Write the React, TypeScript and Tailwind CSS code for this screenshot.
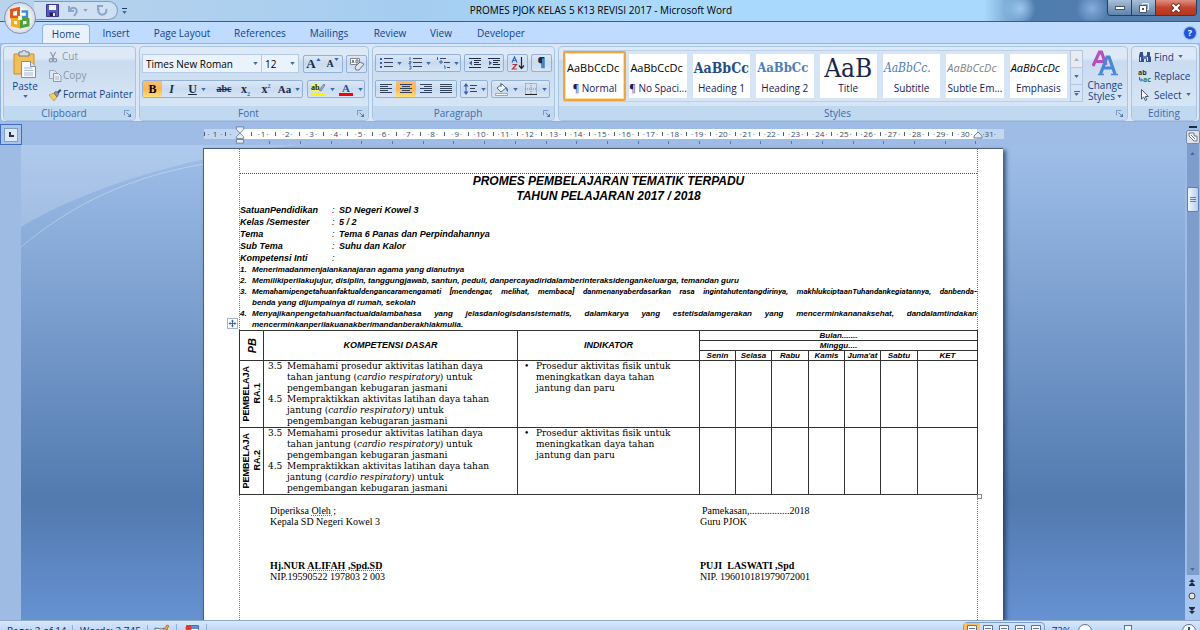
import type { ReactNode } from 'react';
import clsx from 'clsx';

const TABS = [
  { name: 'Insert', width: 'w-[52px]' },
  { name: 'Page Layout', width: 'w-20' },
  { name: 'References', width: 'w-[76px]' },
  { name: 'Mailings', width: 'w-[62px]' },
  { name: 'Review', width: 'w-[60px]' },
  { name: 'View', width: 'w-[42px]' },
  { name: 'Developer', width: 'w-[78px]' },
];

const STYLES = [
  {
    name: '¶ Normal',
    sample: 'AaBbCcDc',
    look: 'text-[11px] text-black',
    selected: true,
  },
  { name: '¶ No Spaci...', sample: 'AaBbCcDc', look: 'text-[11px] text-black' },
  {
    name: 'Heading 1',
    sample: 'AaBbCc',
    look: "text-[14px] font-bold text-[#1f4e85] [font-family:'DejaVu_Serif_Condensed','DejaVu_Serif',serif]",
  },
  {
    name: 'Heading 2',
    sample: 'AaBbCc',
    look: "text-[13px] font-bold text-[#4a7ebb] [font-family:'DejaVu_Serif_Condensed','DejaVu_Serif',serif]",
  },
  {
    name: 'Title',
    sample: 'AaB',
    look: "text-[26px] text-[#17264d] [font-family:'DejaVu_Serif_Condensed','DejaVu_Serif',serif]",
  },
  {
    name: 'Subtitle',
    sample: 'AaBbCc.',
    look: "text-[12px] italic text-[#4a7ebb] [font-family:'DejaVu_Serif_Condensed','DejaVu_Serif',serif]",
  },
  {
    name: 'Subtle Em...',
    sample: 'AaBbCcDc',
    look: 'text-[11px] italic text-[#808080]',
  },
  {
    name: 'Emphasis',
    sample: 'AaBbCcDc',
    look: 'text-[11px] italic text-black',
  },
];

const IDENTITY = [
  ['SatuanPendidikan', 'SD Negeri Kowel 3'],
  ['Kelas /Semester', '5 / 2'],
  ['Tema', 'Tema 6 Panas dan Perpindahannya'],
  ['Sub Tema', 'Suhu dan Kalor'],
  ['Kompetensi Inti', ''],
];

const DAYS = ['Senin', 'Selasa', 'Rabu', 'Kamis', "Juma'at", 'Sabtu', 'KET'];

function Caret({ className }: { className?: string }) {
  return (
    <svg
      viewBox="0 0 6 4"
      className={clsx('h-[3px] w-[5px] shrink-0 fill-[#3d6aa8]', className)}
      aria-hidden="true"
    >
      <path d="M0 0h6L3 4z" />
    </svg>
  );
}

function ButtonStrip({ children }: { children: ReactNode }) {
  return (
    <div className="flex h-[18px] shrink-0 rounded-xs border border-[#93b0d6] bg-linear-to-b from-[#dce8f6] via-[#c9dbef] to-[#d6e5f6]">
      {children}
    </div>
  );
}

function Tool({
  label,
  width = 'w-[19px]',
  active = false,
  caret = false,
  children,
}: {
  label: string;
  width?: string;
  active?: boolean;
  caret?: boolean;
  children: ReactNode;
}) {
  return (
    <button
      type="button"
      aria-label={label}
      className={clsx(
        'flex h-4 items-center justify-center leading-none text-[#1b2a49]',
        caret && 'gap-1',
        width,
        active && 'bg-linear-to-b from-[#f8bd74] via-[#ffb54d] to-[#ffe07e]',
      )}
    >
      {children}
      {caret && <Caret />}
    </button>
  );
}

function Group({
  title,
  width,
  launcher = true,
  children,
}: {
  title: string;
  width: string;
  launcher?: boolean;
  children: ReactNode;
}) {
  return (
    <section
      className={clsx(
        'flex h-[75px] flex-col overflow-hidden rounded-sm border border-[#a9c5e6] bg-linear-to-b from-[#dde9f6] from-15% via-[#c9dbef] via-20% to-[#dbe9f8]',
        width,
      )}
    >
      <div className="flex flex-1">{children}</div>
      <div className="flex h-[14px] items-center bg-[#c1d8f1] text-[10px] leading-3 text-[#3e6aaa]">
        <span className="flex-1 text-center">{title}</span>
        {launcher && (
          <button type="button" aria-label={`${title} options`} className="pr-1">
            <svg viewBox="0 0 8 8" className="size-[7px]" aria-hidden="true">
              <path d="M.5 6V.5H6" fill="none" stroke="#6a8cb8" />
              <path d="M3 3l3 3" stroke="#55769f" />
              <path d="M8 4v4H4z" fill="#55769f" />
            </svg>
          </button>
        )}
      </div>
    </section>
  );
}

/* Text lines; each pair gives a line's two ends */
function LinesIcon({ lines }: { lines: number[][] }) {
  return (
    <svg viewBox="0 0 14 12" className="h-3 w-3.5" aria-hidden="true">
      {lines.map(([from, to], i) => (
        <path
          key={i}
          d={`M${from} ${1.5 + i * 2}H${to}`}
          stroke="#35425c"
          strokeWidth="1"
        />
      ))}
    </svg>
  );
}

function TitleBar() {
  return (
    <header className="flex h-[22px] shrink-0 items-center border-b border-[#3f5c80] bg-[radial-gradient(circle_at_85%_40%,#9cc6ee_0,transparent_16px),radial-gradient(circle_at_91%_40%,#86aede_0,transparent_16px),linear-gradient(to_right,#b8d3ec_0%,#a5cdf0_35%,#a9dafd_55%,#a9dafd_82%,#4e7cad_86%,#557fae_100%)] pl-[34px]">
      <div className="flex h-[19px] w-[84px] items-center gap-2 rounded-r-full border border-l-0 border-[#7f9dc0] bg-[#cfe0f2] pl-3">
        <button type="button" aria-label="Save">
          <svg viewBox="0 0 13 13" className="size-[13px]" aria-hidden="true">
            <path d="M.5.5h12v12h-12z" fill="#5b5bc4" stroke="#37378f" />
            <path d="M3 1h7v5H3z" fill="#eef2ff" />
            <path d="M3.500 8.500h6V12h-6z" fill="#23234f" />
            <path d="M7 9h2v3H7z" fill="#dfe4fa" />
          </svg>
        </button>
        <button type="button" aria-label="Undo" className="flex items-center gap-1">
          <svg viewBox="0 0 12 12" className="size-3" aria-hidden="true">
            <path
              d="M2 1v5h5M2.500 5.500C5 1 11 2.500 9.500 7.500L7 11"
              fill="none"
              stroke="#8ba4c8"
              strokeWidth="2"
            />
          </svg>
          <Caret className="fill-[#8ba4c8]" />
        </button>
        <button type="button" aria-label="Repeat">
          <svg viewBox="0 0 12 12" className="size-3" aria-hidden="true">
            <path
              d="M7 1H2v4M3 3.500A4 4 0 1 0 10 4"
              fill="none"
              stroke="#8ba4c8"
              strokeWidth="2"
            />
          </svg>
        </button>
      </div>
      <button
        type="button"
        aria-label="Customize toolbar"
        className="ml-1 flex flex-col items-center gap-0.5"
      >
        <span className="h-px w-[5px] bg-[#1d3c6c]" />
        <Caret className="fill-[#1d3c6c]" />
      </button>
      <h1 className="flex-1 pr-8 text-center text-[10px] text-black">
        PROMES PJOK KELAS 5 K13 REVISI 2017 - Microsoft Word
      </h1>
      <div className="mr-[3px] flex h-4 self-start overflow-hidden rounded-b-sm border border-t-0 border-[#27405f]">
        <button
          type="button"
          aria-label="Minimize"
          className="flex w-6 items-center justify-center border-r border-[#27405f] bg-linear-to-b from-[#a9bfd8] to-[#5f82aa]"
        >
          <span className="h-1 w-2.5 border border-[#4a5568] bg-white" />
        </button>
        <button
          type="button"
          aria-label="Restore"
          className="flex w-6 items-center justify-center border-r border-[#27405f] bg-linear-to-b from-[#a9bfd8] to-[#5f82aa]"
        >
          <svg viewBox="0 0 12 10" className="h-2.5 w-3" aria-hidden="true">
            <path d="M4.500.5h6v6h-6z" fill="none" stroke="#e8eef6" />
            <path d="M1.500 2.500h7v7h-7z" fill="#fff" stroke="#4a5568" />
            <path d="M4 5h2v2H4z" fill="#4a5568" />
          </svg>
        </button>
        <button
          type="button"
          aria-label="Close"
          className="flex w-10 items-center justify-center bg-linear-to-b from-[#dd8f80] via-[#c5432b] to-[#b5341c]"
        >
          <svg viewBox="0 0 12 10" className="h-2.5 w-3" aria-hidden="true">
            <path d="M2 1l8 8M10 1L2 9" stroke="#5a2a25" strokeWidth="4" />
            <path d="M2.500 1.500l7 7M9.500 1.500l-7 7" stroke="#fff" strokeWidth="2.400" />
          </svg>
        </button>
      </div>
    </header>
  );
}

function OfficeButton() {
  return (
    <button
      type="button"
      aria-label="Office Button"
      className="absolute left-1 top-0.5 flex size-8 items-center justify-center rounded-full border border-[#8795a8] bg-radial from-white from-30% to-[#b9c3d0]"
    >
      <svg viewBox="0 0 22 22" className="size-[22px]" aria-hidden="true">
        <g fill="none" strokeWidth="3">
          <path d="M9.500 10H2.500V3.500l7-2z" stroke="#e2571b" />
          <path d="M12.500 4.500H18V10h-5.500" stroke="#3f8fd8" strokeWidth="2.400" />
          <path d="M9.500 12.500H3.500V18l6 1.500z" stroke="#f4ab1c" />
          <path d="M12.500 12.500H19V18l-6.500 1.500z" stroke="#4fa33a" />
        </g>
        <path d="M9 9h4v4H9z" fill="#fff3c4" />
      </svg>
    </button>
  );
}

function TabRow() {
  return (
    <nav className="flex h-[21px] shrink-0 items-end bg-[#bfdbff] pl-[42px] text-[10px] text-[#15428b]">
      <a
        href="#home"
        className="flex h-[19px] w-12 items-center justify-center rounded-t-sm border border-b-0 border-[#8db2e3] bg-[#e9f1fb]"
      >
        Home
      </a>
      <div className="flex flex-1 items-center">
        {TABS.map((tab) => (
          <a
            key={tab.name}
            href={`#${tab.name}`}
            className={clsx(
              'flex h-[19px] items-center justify-center whitespace-nowrap',
              tab.width,
            )}
          >
            {tab.name}
          </a>
        ))}
      </div>
      <button
        type="button"
        aria-label="Help"
        className="mb-1 mr-1 flex size-3 items-center justify-center rounded-full bg-[#1f56d8] text-[9px] font-bold leading-3 text-white ring-1 ring-[#9db9e0]"
      >
        ?
      </button>
    </nav>
  );
}

function ClipboardGroup() {
  return (
    <Group title="Clipboard" width="w-[133px]">
      <button
        type="button"
        className="flex w-[42px] flex-col items-center pt-[3px] text-[10px] leading-3 text-[#15428b]"
      >
        <svg viewBox="0 0 24 28" className="mb-0.5 h-7 w-6" aria-hidden="true">
          <path d="M1 4h20v20H1z" fill="#f0bf5c" stroke="#c98f2b" />
          <path d="M6 2h3a2 2 0 0 1 4 0h3v4H6z" fill="#d6dbe3" stroke="#6f7a8a" />
          <path d="M8.500 11.500h9l5 5v11h-14z" fill="#f7faff" stroke="#7d8ea8" />
          <path d="M17.500 11.500v5h5" fill="#dfe7f3" stroke="#7d8ea8" />
          <path d="M11 18h8M11 20.500h9M11 23h9M11 25h9" stroke="#aab8cf" />
        </svg>
        Paste
        <Caret className="mt-[3px]" />
      </button>
      <div className="flex flex-col pl-0.5 text-[10px] leading-[19px] text-[#8d96a3]">
        <button type="button" className="flex h-[19px] items-center gap-1">
          <svg viewBox="0 0 12 14" className="h-3.5 w-2.5" aria-hidden="true">
            <path d="M3 1l4 8M9 1L5 9" stroke="#8b96a6" strokeWidth="1.400" />
            <circle cx="3.500" cy="11" r="2" fill="none" stroke="#8b96a6" strokeWidth="1.400" />
            <circle cx="8.500" cy="11" r="2" fill="none" stroke="#8b96a6" strokeWidth="1.400" />
          </svg>
          Cut
        </button>
        <button type="button" className="flex h-[19px] items-center gap-px">
          <svg viewBox="0 0 14 12" className="h-3 w-3.5" aria-hidden="true">
            <path d="M1.500.5h5l2 2v6h-7z" fill="#dde6f2" stroke="#9aa8bd" />
            <path d="M5.500 3.500h5l2.500 2.500v5.500H5.500z" fill="#e8eef7" stroke="#8a9ab2" />
            <path d="M7 7h4M7 9h4" stroke="#a5b3c7" />
          </svg>
          Copy
        </button>
        <button
          type="button"
          className="flex h-[19px] items-center gap-px whitespace-nowrap text-[#15428b]"
        >
          <svg viewBox="0 0 14 12" className="h-3 w-3.5" aria-hidden="true">
            <path d="M1 6l5-2 3 4-3 4z" fill="#f3cf63" stroke="#a9842c" strokeWidth=".6" />
            <path d="M6 4l2-2 3 3-2 3z" fill="#8e94a8" stroke="#4c5268" strokeWidth=".6" />
            <path d="M9 3l3-3 1.500 1.500-3 3z" fill="#3e4a86" />
          </svg>
          Format Painter
        </button>
      </div>
    </Group>
  );
}

function FontGroup() {
  return (
    <Group title="Font" width="w-[230px]">
      <div className="flex flex-col gap-[7px] pl-0.5 pt-[7px]">
        <div className="flex items-center">
          <div className="relative flex items-center">
            <select
              aria-label="Font name"
              className="h-[19px] w-[120px] appearance-none border border-[#b4cbe8] bg-[#eaf2fb] pl-[3px] text-[10px] leading-4 text-black"
            >
              <option>Times New Roman</option>
            </select>
            <Caret className="absolute right-1" />
          </div>
          <div className="relative mr-1 flex items-center">
            <select
              aria-label="Font size"
              className="h-[19px] w-[37px] appearance-none border border-l-0 border-[#b4cbe8] bg-[#eaf2fb] pl-[3px] text-[10px] leading-4 text-black"
            >
              <option>12</option>
            </select>
            <Caret className="absolute right-1" />
          </div>
          <ButtonStrip>
            <Tool label="Grow font">
              <span className="text-[13px] font-bold [font-family:'Liberation_Serif',serif]">A</span>
              <Caret className="mb-2 rotate-180" />
            </Tool>
            <Tool label="Shrink font">
              <span className="text-[10px] font-bold [font-family:'Liberation_Serif',serif]">A</span>
              <Caret className="mb-2" />
            </Tool>
          </ButtonStrip>
          <div className="w-[3px]" />
          <ButtonStrip>
            <Tool label="Clear formatting">
              <svg viewBox="0 0 16 14" className="h-3.5 w-4" aria-hidden="true">
                <path d="M1.500 1.500h9v6h-9z" fill="#fff" stroke="#7c8799" />
                <path d="M3 6l1-3 1 3M7 3v3h2V3z" fill="none" stroke="#2c3850" strokeWidth=".7" />
                <path d="M6 10l5-5 4 2-5 6H7z" fill="#e3e6ef" stroke="#6c7488" />
              </svg>
            </Tool>
          </ButtonStrip>
        </div>
        <div className="flex items-center gap-1 [font-family:'Liberation_Serif',serif]">
          <ButtonStrip>
            <Tool label="Bold" active>
              <span className="text-[12px] font-bold text-black">B</span>
            </Tool>
            <Tool label="Italic">
              <span className="text-[12px] font-bold italic">I</span>
            </Tool>
            <Tool label="Underline" width="w-8" caret>
              <span className="text-[12px] font-bold underline">U</span>
            </Tool>
            <Tool label="Strikethrough" width="w-[22px]">
              <span className="text-[10px] font-bold line-through">abc</span>
            </Tool>
            <Tool label="Subscript" width="w-[21px]">
              <span className="text-[12px] font-bold">x</span>
              <span className="self-end text-[6px] font-bold text-[#2a5fc4]">2</span>
            </Tool>
            <Tool label="Superscript" width="w-5">
              <span className="text-[12px] font-bold">x</span>
              <span className="mt-0.5 self-start text-[6px] font-bold text-[#2a5fc4]">2</span>
            </Tool>
            <Tool label="Change case" width="w-[26px]" caret>
              <span className="text-[11px] font-bold">Aa</span>
            </Tool>
          </ButtonStrip>
          <ButtonStrip>
            <Tool label="Text highlight color" width="w-7" caret>
              <svg viewBox="0 0 16 14" className="h-3.5 w-4" aria-hidden="true">
                <path d="M1 1h8v8H1z" fill="#f7f36a" />
                <text x="1" y="8" fontSize="8" fontWeight="bold" fill="#222">ab</text>
                <path d="M9 8l5-6 1 1-4 6z" fill="#9fb0cc" stroke="#4c5b78" strokeWidth=".6" />
                <path d="M1 11h14v3H1z" fill="#fff200" />
              </svg>
            </Tool>
            <Tool label="Font color" width="w-7" caret>
              <svg viewBox="0 0 16 14" className="h-3.5 w-4" aria-hidden="true">
                <text x="4" y="10" fontSize="11" fontWeight="bold" fill="#2f4f8c">A</text>
                <path d="M1 11h14v3H1z" fill="#f00" />
              </svg>
            </Tool>
          </ButtonStrip>
        </div>
      </div>
    </Group>
  );
}

function ListIcon({ kind }: { kind: 'bullet' | 'number' | 'multi' }) {
  return (
    <svg viewBox="0 0 14 14" className="h-3.5 w-3.5" aria-hidden="true">
      {kind === 'bullet' && (
        <path d="M1 2h2v2H1zM1 6h2v2H1zM1 10h2v2H1z" fill="#2f62b5" />
      )}
      {kind === 'number' && (
        <path d="M2 1v3M1 5.500h2v1.500H1V8h2M1 10h2v3H1" fill="none" stroke="#2f62b5" strokeWidth=".9" />
      )}
      {kind === 'multi' ? (
        <>
          <path d="M1.500 1v3M4 5h2v2H4zM8 10h1v3" fill="none" stroke="#2f62b5" />
          <path d="M4 2.500h6M8 6.500h6M11 11.500h3" stroke="#39455e" />
        </>
      ) : (
        <path d="M5 2.500h9M5 6.500h9M5 10.500h9" stroke="#39455e" />
      )}
    </svg>
  );
}

function IndentIcon({ right = false }: { right?: boolean }) {
  return (
    <svg viewBox="0 0 14 12" className="h-3 w-3.5" aria-hidden="true">
      <path
        d="M1 1.500h12M6 3.500h7M6 5.500h5M6 7.500h7M1 10.500h12"
        stroke="#222c42"
      />
      <path d={right ? 'M2 3.500L5 6 2 8.500z' : 'M4 3.500L1 6l3 2.500z'} fill="#2f62b5" />
    </svg>
  );
}

function ParagraphGroup() {
  return (
    <Group title="Paragraph" width="w-[183px]">
      <div className="flex flex-col gap-2 pl-0.5 pt-[7px]">
        <div className="flex gap-[3px]">
          <ButtonStrip>
            <Tool label="Bullets" width="w-[29px]" caret>
              <ListIcon kind="bullet" />
            </Tool>
            <Tool label="Numbering" width="w-[29px]" caret>
              <ListIcon kind="number" />
            </Tool>
            <Tool label="Multilevel list" width="w-[26px]" caret>
              <ListIcon kind="multi" />
            </Tool>
          </ButtonStrip>
          <ButtonStrip>
            <Tool label="Decrease indent">
              <IndentIcon />
            </Tool>
            <Tool label="Increase indent">
              <IndentIcon right />
            </Tool>
          </ButtonStrip>
          <ButtonStrip>
            <Tool label="Sort">
              <svg viewBox="0 0 14 14" className="size-3.5" aria-hidden="true">
                <path d="M1 6.500L3.500 1 6 6.500M2 4.500h3" fill="none" stroke="#2f62b5" strokeWidth="1.200" />
                <path d="M1.500 8.500h4l-4 4.500h4.500" fill="none" stroke="#b0343a" strokeWidth="1.200" />
                <path d="M10.500 1v11M8 9.500l2.500 3 2.500-3" fill="none" stroke="#222" strokeWidth="1.200" />
              </svg>
            </Tool>
          </ButtonStrip>
          <ButtonStrip>
            <Tool label="Show formatting marks">
              <span className="text-[12px] font-bold">¶</span>
            </Tool>
          </ButtonStrip>
        </div>
        <div className="flex gap-[3px]">
          <ButtonStrip>
            <Tool label="Align left" width="w-5">
              <LinesIcon lines={[[1, 13], [1, 9], [1, 13], [1, 9], [1, 13]]} />
            </Tool>
            <Tool label="Center" width="w-5" active>
              <LinesIcon lines={[[1, 13], [3, 11], [1, 13], [3, 11], [1, 13]]} />
            </Tool>
            <Tool label="Align right" width="w-5">
              <LinesIcon lines={[[1, 13], [5, 13], [1, 13], [5, 13], [1, 13]]} />
            </Tool>
            <Tool label="Justify" width="w-5">
              <LinesIcon lines={[[1, 13], [1, 13], [1, 13], [1, 13], [1, 13]]} />
            </Tool>
          </ButtonStrip>
          <ButtonStrip>
            <Tool label="Line spacing" width="w-[26px]" caret>
              <svg viewBox="0 0 14 14" className="size-3.5" aria-hidden="true">
                <path d="M3 1l2.500 3.500h-5zM3 13L.5 9.500h5zM2.500 4h1v6h-1z" fill="#2f62b5" />
                <path d="M7 3.500h7M7 6.500h5M7 9.500h7" stroke="#39455e" />
              </svg>
            </Tool>
          </ButtonStrip>
          <ButtonStrip>
            <Tool label="Shading" width="w-[29px]" caret>
              <svg viewBox="0 0 14 14" className="size-3.5" aria-hidden="true">
                <path d="M2 6l5-4 4 4-5 4z" fill="#f2f5fa" stroke="#5a6880" />
                <path d="M6 1v4" stroke="#5a6880" />
                <path d="M11 5c2 1 2 3 2 5-1-1-2-1-2-5z" fill="#2f62b5" />
                <path d="M.5 11.500h12v2H.5z" fill="#fff" stroke="#9aa6b8" />
              </svg>
            </Tool>
            <Tool label="Borders" width="w-7" caret>
              <svg viewBox="0 0 14 14" className="size-3.5" aria-hidden="true">
                <path
                  d="M1.500 1.500h11v11M1.500 1.500v11M7 1v11M1 7h12"
                  fill="none"
                  stroke="#7d8ba3"
                  strokeDasharray="1 1"
                />
                <path d="M1 12.500h12" stroke="#222" />
              </svg>
            </Tool>
          </ButtonStrip>
        </div>
      </div>
    </Group>
  );
}

function StylesGroup() {
  return (
    <Group title="Styles" width="min-w-0 flex-1">
      <div className="flex flex-1 pl-1 pt-[3px]">
        <div className="flex h-[52px] min-w-0 flex-1 border-y border-[#b9d0ea] bg-[#d5e5f6]">
          {STYLES.map((style) => (
            <button
              key={style.name}
              type="button"
              className={clsx(
                'flex h-[50px] min-w-0 flex-1',
                style.selected
                  ? 'rounded-xs border-2 border-[#f0a43c] bg-[#ffdf9a] p-px'
                  : 'p-[3px]',
              )}
            >
              <span className="flex h-full w-full flex-col items-center overflow-hidden bg-white">
                <span
                  className={clsx(
                    'flex h-[27px] w-full items-center overflow-hidden whitespace-nowrap px-px leading-6',
                    style.name === 'Title' ? 'justify-center' : 'justify-start',
                    style.look,
                  )}
                >
                  {style.sample}
                </span>
                <span className="whitespace-nowrap text-[10px] leading-[14px] text-[#15205c]">
                  {style.name}
                </span>
              </span>
            </button>
          ))}
        </div>
        <div className="flex h-[52px] w-[13px] flex-col border border-[#b0c8e4]">
          <button
            type="button"
            aria-label="Previous styles"
            className="flex flex-1 items-center justify-center bg-[#e8ebef]"
          >
            <Caret className="rotate-180 fill-[#a3abb8]" />
          </button>
          <button
            type="button"
            aria-label="Next styles"
            className="flex flex-1 items-center justify-center border-y border-[#b0c8e4] bg-[#d5e5f6]"
          >
            <Caret />
          </button>
          <button
            type="button"
            aria-label="More styles"
            className="flex flex-1 flex-col items-center justify-center gap-px bg-[#d5e5f6]"
          >
            <span className="h-px w-1.5 bg-[#3d6aa8]" />
            <Caret />
          </button>
        </div>
        <button
          type="button"
          className="flex w-11 flex-col items-center text-[10px] leading-[11px] text-[#15428b]"
        >
          <svg viewBox="0 0 26 26" className="mb-1 size-[26px]" aria-hidden="true">
            <path
              d="M1 16L7.500 2h2L14 15M4 11.500h8"
              fill="none"
              stroke="#b54fc0"
              strokeWidth="3.200"
            />
            <path
              d="M8.500 24l6.500-17h2l6 17M11 18h10"
              fill="none"
              stroke="#4a86d8"
              strokeWidth="3.200"
            />
            <path d="M6 24.500h6M19 24.500h7" stroke="#4a86d8" strokeWidth="1.600" />
          </svg>
          <span>Change</span>
          <span className="flex items-center gap-0.5">
            Styles <Caret />
          </span>
        </button>
      </div>
    </Group>
  );
}

function EditingGroup() {
  return (
    <Group title="Editing" width="w-[66px]" launcher={false}>
      <div className="flex flex-col whitespace-nowrap pl-1.5 text-[10px] leading-4 text-[#15428b]">
        <button type="button" className="flex h-[19px] items-center gap-0.5">
          <svg viewBox="0 0 14 12" className="h-3 w-3.5" aria-hidden="true">
            <path d="M2 1h3v3l1 1v6H1V5zM9 1h3v4l1 1v5H8V5l1-1z" fill="#33508c" />
            <path d="M5 5h4v3H5z" fill="#5c79b3" />
            <path d="M2.500 6v4M9.500 6v4" stroke="#dbe6f7" />
          </svg>
          <span className="mr-0.5">Find</span> <Caret />
        </button>
        <button type="button" className="flex h-[19px] items-center gap-0.5">
          <svg viewBox="0 0 14 14" className="size-3.5" aria-hidden="true">
            <text x="0" y="6" fontSize="7" fontWeight="bold" fill="#333">ab</text>
            <text x="5" y="13" fontSize="7" fontWeight="bold" fill="#2c7a3c">ac</text>
            <path d="M1.500 8v3h3M3 9.500L4.500 11 3 12.500" fill="none" stroke="#2f62b5" />
          </svg>
          Replace
        </button>
        <button type="button" className="flex h-[19px] items-center gap-0.5">
          <svg viewBox="0 0 14 12" className="h-3 w-3.5" aria-hidden="true">
            <path d="M3.500.5v9.500l2.200-2 1.600 3.500 1.500-.7L7.300 7.500h3z" fill="#fff" stroke="#46546e" />
          </svg>
          <span className="mr-0.5">Select</span> <Caret />
        </button>
      </div>
    </Group>
  );
}

function Ruler() {
  return (
    <div className="flex h-[23px] shrink-0 bg-[#9ebce6]">
      <button
        type="button"
        aria-label="Tab selector"
        className="mt-0.5 flex h-[21px] w-[22px] items-center justify-center border border-[#3f6bc0] bg-[#a9c4ea]"
      >
        <span className="flex size-3.5 items-center justify-center border border-[#7f9fce] bg-[#dbe8f8]">
          <span className="size-[5px] border-b-2 border-l-2 border-[#26324c]" />
        </span>
      </button>
      <div className="flex flex-1 justify-center">
        <div className="relative w-[800px] pt-[7px]">
          <div className="flex h-2.5 items-center text-[8px] leading-[10px] text-[#3c4a63]">
            <div className="flex h-full w-9 items-center justify-between bg-[#c3d7f2] pr-2">
              <span className="h-1 w-px bg-[#4f5d78]" />
              <span>·</span>
              <span>1</span>
              <span>·</span>
              <span className="h-1 w-px bg-[#4f5d78]" />
              <span>·</span>
            </div>
            <div className="flex h-full flex-1 bg-white">
              <div className="w-[11px]" />
              {Array.from({ length: 30 }, (_, i) => (
                <div key={i} className="flex flex-1 items-center">
                  <span className="h-1 w-px bg-[#4f5d78]" />
                  <span className="flex flex-1 items-center justify-center gap-px whitespace-nowrap">
                    <span>·</span>
                    <span>{i + 1}</span>
                    <span>·</span>
                  </span>
                </div>
              ))}
            </div>
            <div className="h-full w-[27px] bg-[#c3d7f2] pl-1.5">·31·</div>
          </div>
          <div className="ml-9 mr-[27px] mt-0.5 flex h-[3px]">
            {Array.from({ length: 24 }, (_, i) => (
              <span key={i} className="flex-1 border-r border-[#5d79a4]" />
            ))}
          </div>
          <svg
            viewBox="0 0 10 20"
            className="absolute left-[31px] top-1 h-[18px] w-2.5"
            aria-hidden="true"
          >
            <path
              d="M1 1h8v3L5 8 1 4zM5 8l4 4v2H1v-2zM1 15h8v4H1z"
              fill="#e9eff8"
              stroke="#6b7d9b"
            />
          </svg>
          <svg
            viewBox="0 0 10 8"
            className="absolute right-[21px] top-[9px] h-2 w-2.5"
            aria-hidden="true"
          >
            <path d="M5 1l4 4v2H1V5z" fill="#e9eff8" stroke="#6b7d9b" />
          </svg>
        </div>
      </div>
    </div>
  );
}

function Competencies() {
  return (
    <>
      {[
        ['3.5', 'Memahami prosedur aktivitas latihan daya', 'tahan jantung ('],
        ['4.5', 'Mempraktikkan aktivitas latihan daya tahan', 'jantung ('],
      ].map(([code, first, second]) => (
        <p key={code} className="flex whitespace-nowrap pl-1">
          <span className="w-[19px]">{code}</span>
          <span>
            {first}
            <br />
            {second}
            <i>cardio respiratory</i>) untuk
            <br />
            pengembangan kebugaran jasmani
          </span>
        </p>
      ))}
    </>
  );
}

function PlanTable() {
  return (
    <div className="relative -mx-px">
      <span className="absolute -left-3 -top-3 flex size-[11px] items-center justify-center border border-[#a3b4cf] bg-white">
        <svg viewBox="0 0 9 9" className="size-[9px]" aria-hidden="true">
          <path d="M4.500 1v7M1 4.500h7" stroke="#3c62ab" />
          <path
            d="M3 2.500L4.500.5 6 2.500zM3 6.500l1.500 2 1.500-2zM2.500 3L.5 4.500l2 1.500zM6.500 3l2 1.500-2 1.500z"
            fill="#3c62ab"
          />
        </svg>
      </span>
      <table className="w-full table-fixed border-collapse text-[9px] [&_td]:border [&_td]:border-[#333] [&_td]:p-0 [&_th]:border [&_th]:border-[#333] [&_th]:p-0">
        <colgroup>
          <col className="w-6" />
          <col className="w-[254px]" />
          <col />
          <col className="w-9" />
          <col className="w-9" />
          <col className="w-[37px]" />
          <col className="w-9" />
          <col className="w-9" />
          <col className="w-[37px]" />
          <col className="w-[60px]" />
        </colgroup>
        <thead className="italic">
          <tr>
            <th rowSpan={3}>
              <span className="inline-block rotate-180 align-middle text-[11px] leading-3 [writing-mode:vertical-rl]">
                PB
              </span>
            </th>
            <th rowSpan={3}>KOMPETENSI DASAR</th>
            <th rowSpan={3}>INDIKATOR</th>
            <th colSpan={7} className="h-2.5 text-[8px] leading-[9px]">
              Bulan.......
            </th>
          </tr>
          <tr>
            <th colSpan={7} className="h-2.5 text-[8px] leading-[9px]">
              Minggu....
            </th>
          </tr>
          <tr>
            {DAYS.map((day) => (
              <th key={day} className="h-2.5 text-[8px] leading-[9px]">
                {day}
              </th>
            ))}
          </tr>
        </thead>
        <tbody className="align-top leading-[11px] [font-family:'DejaVu_Serif',serif]">
          {[1, 2].map((n) => (
            <tr key={n}>
              <th className="align-middle [font-family:'Liberation_Sans',sans-serif]">
                <span className="inline-block rotate-180 align-middle leading-[11px] [writing-mode:vertical-rl]">
                  PEMBELAJA
                  <br />
                  RA.{n}
                </span>
              </th>
              <td>
                <Competencies />
              </td>
              <td>
                <ul>
                  <li className="flex pl-1.5">
                    <span className="w-3">•</span>
                    <span>
                      Prosedur aktivitas fisik untuk
                      <br />
                      meningkatkan daya tahan
                      <br />
                      jantung dan paru
                    </span>
                  </li>
                </ul>
              </td>
              {DAYS.map((day) => (
                <td key={day} />
              ))}
            </tr>
          ))}
        </tbody>
      </table>
      <span className="absolute -bottom-1 -right-1 size-[5px] border border-[#888] bg-white" />
    </div>
  );
}

function DocumentPage() {
  return (
    <article className="mt-[3px] flex w-[800px] flex-col border-l border-t border-[#4c5f7c] bg-white pl-[35px] pr-[25px] text-black shadow-[3px_2px_4px_rgba(25,45,80,0.7)] [font-family:'Liberation_Sans',sans-serif]">
      <div className="flex flex-1 flex-col border-x border-dotted border-[#777]">
        <div className="h-[25px] border-b border-dotted border-[#555]" />
        <h2 className="text-center text-[12px] font-bold italic leading-[15px]">
          PROMES PEMBELAJARAN TEMATIK TERPADU
          <br />
          TAHUN PELAJARAN 2017 / 2018
        </h2>
        <dl className="grid grid-cols-[92px_1fr] text-[9px] font-bold italic leading-3">
          {IDENTITY.map(([term, value]) => (
            <div key={term} className="contents">
              <dt>{term}</dt>
              <dd className="flex h-3">
                <span className="w-[7px] font-normal">:</span>
                {value}
              </dd>
            </div>
          ))}
        </dl>
        <ol className="text-[8px] font-bold italic leading-[11px]">
          <li className="flex">
            <span className="w-3 shrink-0">1.</span>
            Menerimadanmenjalankanajaran agama yang dianutnya
          </li>
          <li className="flex whitespace-nowrap">
            <span className="w-3 shrink-0">2.</span>
            Memilikiperilakujujur, disiplin, tanggungjawab, santun, peduli,
            danpercayadiridalamberinteraksidengankeluarga, temandan guru
          </li>
          <li className="flex">
            <span className="w-3 shrink-0">3.</span>
            <span className="min-w-0 flex-1">
              <span className="block whitespace-nowrap [font-family:Roboto,sans-serif] [text-align-last:justify]">
                Memahamipengetahuanfaktualdengancaramengamati [mendengar,
                melihat, membaca] danmenanyaberdasarkan rasa
                ingintahutentangdirinya, makhlukciptaanTuhandankegiatannya,
                danbenda-
              </span>
              benda yang dijumpainya di rumah, sekolah
            </span>
          </li>
          <li className="flex">
            <span className="w-3 shrink-0">4.</span>
            <span className="min-w-0 flex-1">
              <span className="block whitespace-nowrap [text-align-last:justify]">
                Menyajikanpengetahuanfactualdalambahasa yang
                jelasdanlogisdansistematis, dalamkarya yang
                estetisdalamgerakan yang mencerminkananaksehat,
                dandalamtindakan
              </span>
              mencerminkanperilakuanakberimandanberakhlakmulia.
            </span>
          </li>
        </ol>
        <PlanTable />
        <div className="grid grid-cols-[430px_1fr] pl-[30px] pt-2.5 text-[10px] leading-[11px] [font-family:'Liberation_Serif',serif]">
          <div>
            <p>
              Diperiksa{' '}
              <span className="underline decoration-[#3c9a3c] decoration-dotted decoration-1">
                Oleh ;
              </span>
            </p>
            <p>Kepala SD Negeri Kowel 3</p>
            <p className="mt-[33px] font-bold">
              Hj.NUR{' '}
              <span className="underline decoration-[#3c9a3c] decoration-dotted decoration-1">
                ALIFAH ,Spd.SD
              </span>
            </p>
            <p>NIP.19590522 197803 2 003</p>
          </div>
          <div>
            <p className="pl-0.5">Pamekasan,................2018</p>
            <p>Guru PJOK</p>
            <p className="mt-[33px] font-bold">PUJI&nbsp; LASWATI ,Spd</p>
            <p>NIP. 196010181979072001</p>
          </div>
        </div>
      </div>
    </article>
  );
}

function ScrollColumn() {
  return (
    <aside className="flex w-[15px] shrink-0 flex-col items-center bg-[#9ebce6] pt-1">
      <span className="h-0.5 w-2 bg-[#1f2c45]" />
      <button
        type="button"
        aria-label="View ruler"
        className="mt-0.5 flex size-3.5 items-center justify-center rounded-xs border border-[#7b8ba6] bg-[#dde3ec]"
      >
        <svg viewBox="0 0 10 10" className="size-2.5" aria-hidden="true">
          <path d="M1 1h5v3h3v5H6L1 4z" fill="#fff" stroke="#6a7486" />
          <path d="M3 3l4 4" stroke="#6a7486" />
        </svg>
      </button>
      <div className="flex w-3 flex-1 flex-col items-center bg-[#7f9dcb] pb-1 pt-2">
        <Caret className="h-1 w-[7px] rotate-180 fill-[#3c5684]" />
        <div className="mt-8 flex h-[25px] w-3 flex-col items-center justify-center gap-px rounded-xs border border-[#5c7fb5] bg-linear-to-r from-[#f2f7fd] to-[#b5cdec]">
          <span className="h-px w-1.5 bg-[#5c7fb5]" />
          <span className="h-px w-1.5 bg-[#5c7fb5]" />
          <span className="h-px w-1.5 bg-[#5c7fb5]" />
        </div>
        <div className="flex-1" />
        <Caret className="h-1 w-[7px] fill-[#3c4f78]" />
      </div>
      <svg viewBox="0 0 15 45" className="h-[45px] w-full bg-[#a9c6f0]" aria-hidden="true">
        <path d="M7 4l3 3H4zM7 7l3 3H4zM4 10h6v1H4z" fill="#1f2c45" />
        <circle cx="7" cy="21" r="3" fill="#e8e4da" stroke="#444" />
        <path d="M7 39l3-3H4zM7 36l3-3H4zM4 32h6v1H4z" fill="#1f2c45" />
      </svg>
    </aside>
  );
}

function StatusBar() {
  return (
    <footer className="-mb-2.5 flex h-5 shrink-0 items-center border-t border-[#8fa9cd] bg-linear-to-b from-[#d8e8fb] to-[#a6c6f0] text-[10px] leading-3 text-[#15306b]">
      <span className="w-[73px] border-r border-[#8fb0dc] pl-[7px]">Page: 2 of 14</span>
      <span className="w-[75px] border-r border-[#8fb0dc] pl-[7px]">Words: 2,745</span>
      <span className="flex w-[29px] justify-center border-r border-[#8fb0dc]">
        <svg viewBox="0 0 16 14" className="h-3.5 w-4" aria-hidden="true">
          <path d="M1 4l6 1 6-1v8l-6 1-6-1z" fill="#fff" stroke="#5c6a84" />
          <path d="M7 9l6-8 2 1-6 8z" fill="#f0b63c" stroke="#9c4a28" strokeWidth=".7" />
        </svg>
      </span>
      <span className="flex w-[30px] justify-center border-r border-[#8fb0dc]">
        <svg viewBox="0 0 14 14" className="size-3.5" aria-hidden="true">
          <path d="M1.500 1.500h12v11h-12z" fill="#fff" stroke="#4a76b8" />
          <path d="M2 2h11v3H2z" fill="#5b8ed6" />
          <circle cx="3.500" cy="4" r="3" fill="#d8402c" />
        </svg>
      </span>
      <div className="flex-1" />
      <div className="flex h-[18px] w-[82px] rounded-sm border border-[#7c9fcf]">
        {['Print Layout', 'Full Screen Reading', 'Web Layout', 'Outline', 'Draft'].map(
          (view, i) => (
            <button
              key={view}
              type="button"
              aria-label={view}
              className={clsx(
                'flex flex-1 items-center justify-center',
                i === 0 && 'bg-[#fbbf60]',
              )}
            >
              <svg viewBox="0 0 10 12" className="h-3 w-2.5" aria-hidden="true">
                <path d="M.5.5h9v11h-9z" fill="#f5f8fd" stroke="#5d7195" />
                <path d="M2 3.500h6M2 6h6M2 8.500h6" stroke="#5d7195" />
              </svg>
            </button>
          ),
        )}
      </div>
      <span className="w-[33px] text-center">73%</span>
      <button
        type="button"
        aria-label="Zoom out"
        className="flex size-3.5 items-center justify-center rounded-full border border-[#5d7195] bg-white"
      >
        <span className="h-0.5 w-2 bg-[#3c4c6c]" />
      </button>
      <div className="relative mx-1 flex w-[82px] items-center">
        <span className="h-px w-full bg-[#5d7195]" />
        <span className="absolute left-7 h-3 w-2 border border-[#5d7195] bg-[#eef4fc]" />
      </div>
      <button
        type="button"
        aria-label="Zoom in"
        className="relative mr-1 flex size-3.5 items-center justify-center rounded-full border border-[#5d7195] bg-white"
      >
        <span className="h-0.5 w-2 bg-[#3c4c6c]" />
        <span className="absolute h-2 w-0.5 bg-[#3c4c6c]" />
      </button>
    </footer>
  );
}

export default function App() {
  return (
    <div className="relative flex h-screen flex-col overflow-hidden bg-[#9ebce6] [font-family:'Open_Sans','Noto_Sans',sans-serif]">
      <TitleBar />
      <OfficeButton />
      <TabRow />
      <div className="flex h-[79px] shrink-0 gap-[3px] rounded-sm border border-[#8db2e3] bg-[#dbe7f5] px-0.5 pt-0.5">
        <ClipboardGroup />
        <FontGroup />
        <ParagraphGroup />
        <StylesGroup />
        <EditingGroup />
      </div>
      <div className="flex min-h-0 flex-1">
        <div className="flex min-w-0 flex-1 flex-col">
          <Ruler />
          <div className="flex min-h-0 flex-1">
            <div className="w-[21px] shrink-0 bg-[#9dbbe3]" />
            <main className="relative flex min-w-0 flex-1 justify-center overflow-hidden bg-linear-to-b from-[#9fbfe9] via-[#527aaf] via-75% to-[#6692d2]">
              <svg
                viewBox="0 0 280 110"
                className="absolute left-0 top-0 h-[110px] w-[280px]"
                aria-hidden="true"
              >
                <path d="M0 0h280C180 8 70 40 0 82z" fill="#fff" opacity=".18" />
                <path d="M0 102C50 60 110 30 190 18" fill="none" stroke="#fff" opacity=".3" />
              </svg>
              <div className="relative flex">
                <DocumentPage />
              </div>
            </main>
          </div>
        </div>
        <ScrollColumn />
      </div>
      <StatusBar />
    </div>
  );
}
